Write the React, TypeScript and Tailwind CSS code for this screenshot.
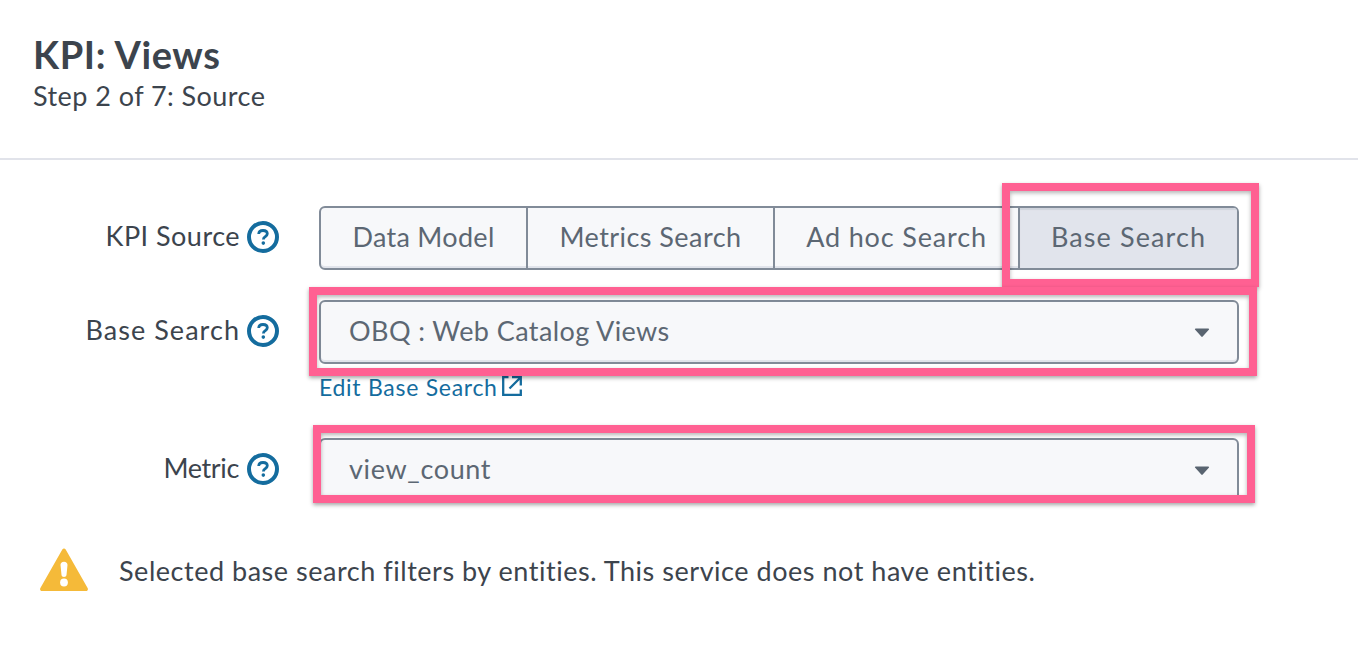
import type { ReactNode } from "react";

function HelpIcon() {
  return (
    <svg className="mb-0.5 ml-2 h-8 w-8 shrink-0" viewBox="0 0 32 32" fill="none" stroke="#146c9e">
      <circle cx="16" cy="16" r="14" strokeWidth="4" />
      <path d="M11.7 13C11.8 10.7 13.500 9.500 16 9.500c2.500 0 4.300 1.300 4.300 3.300 0 2.900-3.900 2.800-3.900 5.600" strokeWidth="2.800" />
      <circle cx="16.300" cy="22.100" r="1.800" fill="#146c9e" stroke="none" />
    </svg>
  );
}

function Caret() {
  return (
    <svg className="mr-[27px] mt-px h-[10px] w-4" viewBox="0 0 16 10">
      <path d="M1.700.5h12.600c.8 0 1 .8.5 1.300L8.700 8.600c-.4.4-1 .4-1.400 0L1.200 1.800C.7 1.300.9.5 1.700.5Z" fill="#596470" />
    </svg>
  );
}

function ExternalIcon() {
  return (
    <svg className="mb-[3px] ml-[3px] h-[22px] w-[22px]" viewBox="0 0 22 22" fill="none" stroke="#146c9e" strokeWidth="2.300">
      <path d="M7.500 2.200H2.200V19.800H19.800V14.500M11 2.200H19.800V10.500M19.500 2.500L8.500 13.500" />
    </svg>
  );
}

function Label({ children, className }: { children: ReactNode; className: string }) {
  return (
    <div className="mr-10 flex h-16 w-[279px] shrink-0 items-center justify-end whitespace-nowrap text-[#3c444d]">
      <span className={`pb-1 ${className}`}>{children}</span>
      <HelpIcon />
    </div>
  );
}

const frame =
  "pointer-events-none absolute border-[8.500px] border-[#ff6092] shadow-[0_2px_4px_rgba(0,0,0,.35),inset_0_2px_4px_rgba(0,0,0,.3)]";

export default function App() {
  return (
    <main className="h-[664px] w-[1358px] overflow-hidden bg-white font-['Lato',sans-serif] text-[27px] leading-8 text-[#3c444d]">
      <header className="h-40 border-b-2 border-[#e1e3ea] pl-[33px] pt-8">
        <h1 className="text-[38px] leading-[44px] font-bold tracking-[0.600px]">KPI: Views</h1>
        <p className="mt-1 tracking-[0.450px]">Step 2 of 7: Source</p>
      </header>
      <section className="pt-[46px] text-[#5c6773]">
        <div className="flex">
          <Label className="-mr-px tracking-[0.480px]">KPI Source</Label>
          <div className="relative flex h-16 w-[920px]">
            <div className="flex w-full overflow-hidden rounded-md border-2 border-[#818b98] bg-[#f7f8fa] text-center leading-[57px] shadow-[inset_0_-2px_0_#e1e4eb]">
              <button className="w-[207px] border-r-2 border-[#818b98] pb-[5px] tracking-[0.300px]">Data Model</button>
              <button className="w-[247px] border-r-2 border-[#818b98] pb-[5px] tracking-[0.450px]">Metrics Search</button>
              <button className="w-[245px] border-r-2 border-[#818b98] pb-[5px] tracking-[0.850px]">Ad hoc Search</button>
              <button className="flex-1 bg-[#e1e4ec] pb-[5px] tracking-[1.100px] shadow-[inset_0_2px_1px_#cfd3dc]">Base Search</button>
            </div>
            <div className={`${frame} -top-[23px] left-[683px] h-[104px] w-[257px]`} />
          </div>
        </div>
        <div className="mt-[30px] flex">
          <Label className="-mr-px tracking-[1.050px]">Base Search</Label>
          <div className="relative h-16 w-[920px]">
            <div className="flex h-16 items-center justify-between rounded-md border-2 border-[#818b98] bg-[#f7f8fa] pl-7 shadow-[inset_0_-2px_0_#e1e4eb]">
              <span className="pb-[3px] tracking-[0.410px]">OBQ : Web Catalog Views</span>
              <Caret />
            </div>
            <div className={`${frame} -left-[10px] -top-[13px] h-[89px] w-[948px]`} />
          </div>
        </div>
        <a className="ml-[319px] mt-[7px] flex h-8 w-fit items-center text-[23px] text-[#146c9e]">
          <span className="tracking-[0.720px]">Edit Base Search</span>
          <ExternalIcon />
        </a>
        <div className="mt-[35px] flex">
          <Label className="tracking-[-0.350px]">Metric</Label>
          <div className="relative h-16 w-[920px]">
            <div className="h-[57px] overflow-hidden">
              <div className="flex h-16 items-center justify-between rounded-md border-2 border-[#818b98] bg-[#f7f8fa] pl-7">
                <span className="pb-[3px] tracking-[0.650px]">view_count</span>
                <Caret />
              </div>
            </div>
            <div className={`${frame} -left-[6px] -top-[13px] h-[78px] w-[942px]`} />
          </div>
        </div>
      </section>
      <div className="ml-10 mt-[46px] flex h-11 items-center">
        <svg className="h-11 w-12" viewBox="0 0 48 44">
          <path d="M22.300 1.500c.8-1.300 2.600-1.300 3.400 0L47.600 40c.8 1.400 0 3-1.600 3H2c-1.600 0-2.400-1.600-1.600-3Z" fill="#f5ba39" />
          <path d="M20.500 17c-.1-2 1.300-3.300 3.500-3.300s3.600 1.300 3.500 3.300l-1 10c-.1 1.300-1.200 2-2.500 2s-2.400-.7-2.500-2Z" fill="white" />
          <circle cx="24" cy="34.500" r="3.900" fill="white" />
        </svg>
        <span className="ml-[31px] whitespace-nowrap pt-0.5 tracking-[0.530px]">Selected base search filters by entities. This service does not have entities.</span>
      </div>
    </main>
  );
}
